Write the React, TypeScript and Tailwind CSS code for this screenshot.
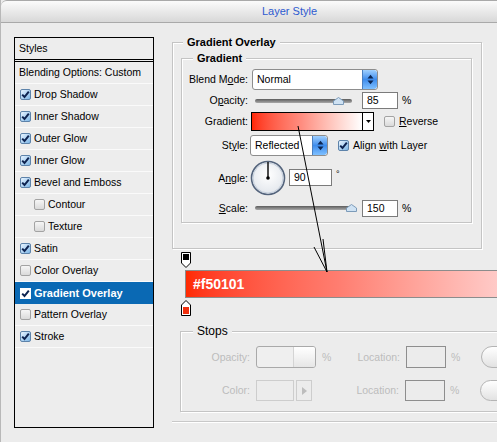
import type { ReactNode } from "react";

const styleRows = [
  { label: "Drop Shadow", checked: true },
  { label: "Inner Shadow", checked: true },
  { label: "Outer Glow", checked: true },
  { label: "Inner Glow", checked: true },
  { label: "Bevel and Emboss", checked: true },
  { label: "Contour", checked: false, indent: true },
  { label: "Texture", checked: false, indent: true },
  { label: "Satin", checked: true },
  { label: "Color Overlay", checked: false },
  { label: "Gradient Overlay", checked: true, active: true },
  { label: "Pattern Overlay", checked: false },
  { label: "Stroke", checked: true },
];

function Check({ checked, inverted }: { checked: boolean; inverted?: boolean }) {
  if (!checked) {
    return (
      <span className="block h-[11px] w-[11px] shrink-0 rounded-[2px] border border-[#a3a3a3] bg-gradient-to-b from-[#f6f6f6] to-[#dadada]" />
    );
  }
  return (
    <span
      className={
        inverted
          ? "flex h-[11px] w-[11px] shrink-0 items-center justify-center border border-white bg-white"
          : "flex h-[11px] w-[11px] shrink-0 items-center justify-center rounded-[2px] border border-[#5d83aa] bg-gradient-to-br from-[#e8f4ff] to-[#7db6e6]"
      }
    >
      <svg viewBox="0 0 9 9" className="h-[9px] w-[9px]" aria-hidden="true">
        <path d="M1.2 4.6 L3.5 7 L7.8 1.6" fill="none" stroke="#0d2350" strokeWidth="2" />
      </svg>
    </span>
  );
}

// blue mac-style up/down button on the right of a select
function SpinButton() {
  return (
    <span className="flex h-full w-[15px] items-center justify-center rounded-r-[3px] border-l border-[#4a7fc0] bg-gradient-to-b from-[#9fd0ff] via-[#3d8cec] to-[#7fc0ff]">
      <svg viewBox="0 0 7 11" className="h-[11px] w-[7px]" aria-hidden="true">
        <path d="M3.5 0.8 L6.5 4.4 H0.5 Z" fill="#0b2552" />
        <path d="M0.5 6.6 H6.5 L3.5 10.2 Z" fill="#0b2552" />
      </svg>
    </span>
  );
}

function Select({ value, width }: { value: string; width: string }) {
  return (
    <span
      className={`flex h-[21px] ${width} items-stretch overflow-hidden rounded-[3px] border border-[#8d8d8d] bg-white`}
    >
      <span className="flex flex-1 items-center pl-[4px] text-[10.5px]">{value}</span>
      <SpinButton />
    </span>
  );
}

function Slider({ thumb }: { thumb: number }) {
  return (
    <span className="relative block h-[4px] w-[97px] rounded-full bg-gradient-to-b from-[#5d5d5d] to-[#a9a9a9]">
      <svg
        viewBox="0 0 11 8"
        className="absolute top-[-2px] h-[8px] w-[11px]"
        style={{ left: thumb }}
        aria-hidden="true"
      >
        <path d="M0.5 4 L5.5 0.5 L10.5 4 V7.5 H0.5 Z" fill="#cfe2f3" stroke="#7c9bb9" />
      </svg>
    </span>
  );
}

function NumBox({ value, width }: { value: string; width: string }) {
  return (
    <span className={`flex h-[17px] ${width} items-center border border-[#7b7b7b] bg-white pl-[4px]`}>
      {value}
    </span>
  );
}

function Label({ children }: { children: ReactNode }) {
  return <span className="w-[66px] shrink-0 text-right">{children}</span>;
}

function Group({
  title,
  className,
  titleClass,
  children,
}: {
  title: string;
  className: string;
  titleClass: string;
  children?: ReactNode;
}) {
  return (
    <div className={`relative border border-[#c4c4c4] shadow-[inset_1px_1px_0_#fff,1px_1px_0_#fff] ${className}`}>
      <span className={`absolute top-[-7px] bg-[#ececec] px-[4px] leading-[13px] ${titleClass}`}>
        {title}
      </span>
      {children}
    </div>
  );
}

function StopMarkerTop() {
  return (
    <svg viewBox="0 0 10 16" className="ml-[9px] h-[16px] w-[10px]" aria-hidden="true">
      <path d="M0.5 0.5 H9.5 V11 L5 15.5 L0.5 11 Z" fill="#fff" stroke="#000" />
      <rect x="2" y="2" width="6" height="6" fill="#000" />
    </svg>
  );
}

function StopMarkerBottom() {
  return (
    <svg viewBox="0 0 10 16" className="ml-[9px] h-[16px] w-[10px]" aria-hidden="true">
      <path d="M5 0.5 L9.5 5 V15.5 H0.5 V5 Z" fill="#fff" stroke="#000" />
      <rect x="2" y="7" width="6" height="7" fill="#f2300e" />
    </svg>
  );
}

export default function App() {
  return (
    <div className="relative h-[442px] w-[497px] overflow-hidden border-l border-[#b8b8b8] bg-[#ececec] font-['Liberation_Sans',Arial,sans-serif] text-[10.5px] leading-none text-black">
      {/* title bar */}
      <div className="flex h-[23px] items-center rounded-tl-[6px] border-b border-t border-[#a9a9a9] bg-gradient-to-b from-[#fbfbfb] to-[#d8d8d8] pl-[261px] text-[11px] text-[#2d5ad0]">
        Layer Style
      </div>

      <div className="flex items-start pt-[14px]">
        {/* styles list */}
        <div className="ml-[13px] flex h-[391px] w-[140px] shrink-0 flex-col border border-black bg-[#ededed]">
          <div className="flex h-[24px] shrink-0 items-center border-b-[3px] border-double border-black pl-[4px]">
            Styles
          </div>
          <div className="flex h-[22px] shrink-0 items-center border-b border-[#fafafa] pl-[4px]">
            Blending Options: Custom
          </div>
          {styleRows.map((r) => (
            <div
              key={r.label}
              className={
                r.active
                  ? "flex h-[22px] shrink-0 items-center gap-[3px] bg-[#0a69b4] pl-[5px] font-bold text-white"
                  : `flex h-[22px] shrink-0 items-center gap-[3px] border-b border-[#fafafa] ${r.indent ? "pl-[19px]" : "pl-[5px]"}`
              }
            >
              <Check checked={r.checked} inverted={r.active} />
              <span className={r.active ? "text-[11px]" : ""}>{r.label}</span>
            </div>
          ))}
        </div>

        {/* settings */}
        <div className="ml-[18px] mt-[5px] flex flex-col">
          <Group
            title="Gradient Overlay"
            titleClass="left-[10px] text-[11px] font-bold"
            className="h-[207px] w-[310px]"
          >
            <Group
              title="Gradient"
              titleClass="left-[11px] text-[11px] font-bold"
              className="ml-[8px] mt-[15px] h-[165px] w-[291px]"
            >
              <div className="flex flex-col pt-[9px]">
                <div className="flex h-[22px] items-center">
                  <Label>
                    Blend M<u>o</u>de:
                  </Label>
                  <span className="ml-[4px]">
                    <Select value="Normal" width="w-[126px]" />
                  </span>
                </div>
                <div className="flex h-[21px] items-center">
                  <Label>
                    O<u>p</u>acity:
                  </Label>
                  <span className="ml-[7px]">
                    <Slider thumb={78} />
                  </span>
                  <span className="ml-[10px]">
                    <NumBox value="85" width="w-[36px]" />
                  </span>
                  <span className="ml-[4px]">%</span>
                </div>
                <div className="flex h-[21px] items-center">
                  <Label>Gradient:</Label>
                  <span className="ml-[3px] flex h-[19px] w-[123px] border border-black bg-white">
                    <span className="h-full flex-1 bg-gradient-to-r from-[#ff2600] via-[#ff8d80] via-45% to-white" />
                    <span className="flex w-[11px] items-center justify-center border-l border-black">
                      <svg viewBox="0 0 5 3" className="h-[3px] w-[5px]" aria-hidden="true">
                        <path d="M0 0 H5 L2.5 3 Z" fill="#000" />
                      </svg>
                    </span>
                  </span>
                  <span className="ml-[10px]">
                    <Check checked={false} />
                  </span>
                  <span className="ml-[4px]">
                    <u>R</u>everse
                  </span>
                </div>
                <div className="mt-[2px] flex h-[22px] items-center">
                  <Label>
                    St<u>y</u>le:
                  </Label>
                  <span className="ml-[2px]">
                    <Select value="Reflected" width="w-[78px]" />
                  </span>
                  <span className="ml-[10px]">
                    <Check checked />
                  </span>
                  <span className="ml-[4px]">
                    Align <u>w</u>ith Layer
                  </span>
                </div>
                <div className="mt-[4px] flex h-[36px] items-center">
                  <Label>
                    A<u>n</u>gle:
                  </Label>
                  <svg viewBox="0 0 36 36" className="ml-[2px] h-[36px] w-[36px]" aria-hidden="true">
                    <defs>
                      <radialGradient id="dial" cx="50%" cy="40%" r="60%">
                        <stop offset="0%" stopColor="#ffffff" />
                        <stop offset="100%" stopColor="#e2e6ec" />
                      </radialGradient>
                    </defs>
                    <circle cx="18" cy="18" r="16.5" fill="url(#dial)" stroke="#54647c" strokeWidth="1.6" />
                    <circle cx="18" cy="18" r="15" fill="none" stroke="#c5cfdc" strokeWidth="1" />
                    <line x1="18" y1="18" x2="18" y2="2" stroke="#000" strokeWidth="1.4" />
                    <circle cx="18" cy="18" r="1.8" fill="#000" />
                  </svg>
                  <span className="ml-[3px] mt-[9px] self-start">
                    <NumBox value="90" width="w-[43px]" />
                  </span>
                  <span className="ml-[4px] mt-[10px] self-start text-[9px]">°</span>
                </div>
                <div className="mt-[2px] flex h-[20px] items-center">
                  <Label>
                    <u>S</u>cale:
                  </Label>
                  <span className="ml-[7px]">
                    <Slider thumb={91} />
                  </span>
                  <span className="ml-[10px]">
                    <NumBox value="150" width="w-[36px]" />
                  </span>
                  <span className="ml-[4px]">%</span>
                </div>
              </div>
            </Group>
          </Group>

          {/* gradient bar with stops */}
          <div className="mt-[3px] flex flex-col">
            <StopMarkerTop />
            <div className="ml-[13px] mt-[2px] flex h-[28px] w-[340px] items-center border border-[#8c8c8c] bg-gradient-to-r from-[#ff2a00] via-[#ff7d70] via-45% to-[#ffd6d6] pl-[7px] text-[14px] font-bold text-white">
              #f50101
            </div>
            <div className="mt-[2px]">
              <StopMarkerBottom />
            </div>
          </div>

          {/* stops */}
          <Group
            title="Stops"
            titleClass="left-[12px] text-[12px]"
            className="ml-[8px] mt-[15px] h-[81px] w-[340px]"
          >
            <div className="flex flex-col pt-[14px] text-[#bcbcbc]">
              <div className="flex h-[22px] items-center">
                <span className="w-[69px] text-right">Opacity:</span>
                <span className="ml-[6px] flex h-[22px] w-[60px] overflow-hidden rounded-[3px] border border-[#a9a9a9] bg-[#efefef]">
                  <span className="flex-1" />
                  <span className="w-[22px] border-l border-[#d4d4d4] bg-gradient-to-b from-white to-[#e6e6e6]" />
                </span>
                <span className="ml-[6px] w-[12px]">%</span>
                <span className="ml-[17px] w-[49px] text-right">Location:</span>
                <span className="ml-[6px] h-[22px] w-[40px] border border-[#8e8e8e]" />
                <span className="ml-[5px] w-[12px]">%</span>
                <span className="ml-[18px] h-[22px] w-[30px] rounded-l-full border border-[#b4b4b4] bg-gradient-to-b from-white to-[#e2e2e2]" />
              </div>
              <div className="mt-[12px] flex h-[21px] items-center">
                <span className="w-[69px] text-right">Color:</span>
                <span className="ml-[6px] h-[21px] w-[38px] border border-[#cdcdcd]" />
                <span className="ml-[2px] flex h-[21px] w-[16px] items-center justify-center border border-[#cdcdcd]">
                  <svg viewBox="0 0 5 8" className="h-[8px] w-[5px]" aria-hidden="true">
                    <path d="M0 0 L5 4 L0 8 Z" fill="#bdbdbd" />
                  </svg>
                </span>
                <span className="ml-[38px] w-[49px] text-right">Location:</span>
                <span className="ml-[6px] h-[21px] w-[40px] border border-[#8e8e8e]" />
                <span className="ml-[5px] w-[12px]">%</span>
                <span className="ml-[18px] h-[21px] w-[30px] rounded-l-full border border-[#b4b4b4] bg-gradient-to-b from-white to-[#e2e2e2]" />
              </div>
            </div>
          </Group>

          <div className="mt-[9px] h-px w-[330px] bg-[#c8c8c8] shadow-[0_1px_0_#fff]" />
        </div>
      </div>

      {/* annotation arrow drawn over the dialog */}
      <svg className="pointer-events-none absolute inset-0 h-[442px] w-[497px]" aria-hidden="true">
        <line x1="297" y1="126" x2="326" y2="272" stroke="#000" strokeWidth="1" />
        <line x1="326" y1="272" x2="313" y2="247" stroke="#000" strokeWidth="1" />
        <line x1="326" y1="272" x2="322" y2="239" stroke="#000" strokeWidth="1" />
      </svg>
    </div>
  );
}
